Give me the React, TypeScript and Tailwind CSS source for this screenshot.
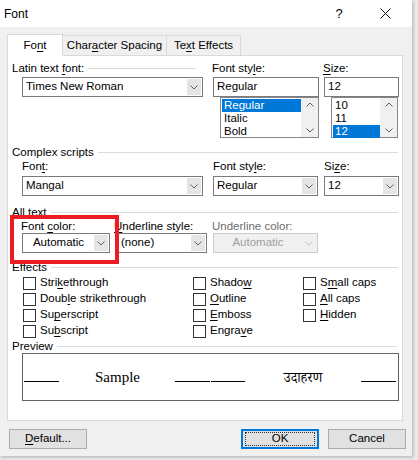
import React from 'react';

const Chevron: React.FC<{ up?: boolean; color?: string }> = ({ up, color = '#606060' }) => (
  <svg width="8" height="5" viewBox="0 0 8 5" className="block">
    <path d={up ? 'M0.5 4.5 L4 1 L7.5 4.5' : 'M0.5 0.5 L4 4 L7.5 0.5'} fill="none" stroke={color} strokeWidth="1" />
  </svg>
);

// label with an underlined access key
const Acc: React.FC<{ text: string; k: number }> = ({ text, k }) => (
  <>
    {text.slice(0, k)}
    <span className="underline underline-offset-2">{text[k]}</span>
    {text.slice(k + 1)}
  </>
);

const GroupLabel: React.FC<{ children: React.ReactNode; lineClass?: string }> = ({ children, lineClass = '' }) => (
  <div className="flex items-center h-[14px] leading-[14px] -ml-[10px]">
    <span className="whitespace-nowrap">{children}</span>
    <div className={`h-px bg-[#dcdcdc] flex-1 ml-[4px] ${lineClass}`} />
  </div>
);

const Combo: React.FC<{ value: string; w: string; center?: boolean; disabled?: boolean }> = ({ value, w, center, disabled }) => (
  <div
    className={`${w} h-[20px] flex border ${
      disabled ? 'border-[#cccccc] bg-[#f0f0f0] text-[#a0a0a0]' : 'border-[#7a7a7a] bg-white text-black'
    }`}
  >
    <div className={`flex-1 flex items-center px-[3px] whitespace-nowrap overflow-hidden ${center ? 'justify-center' : ''}`}>{value}</div>
    <div className={`w-[14px] m-[1px] ml-0 flex items-center justify-center ${disabled ? 'bg-[#f0f0f0]' : 'bg-[#e5e5e5]'}`}>
      <Chevron color={disabled ? '#c4c4c4' : '#606060'} />
    </div>
  </div>
);

const TextBox: React.FC<{ value: string; w: string }> = ({ value, w }) => (
  <div className={`${w} h-[20px] border border-[#7a7a7a] bg-white flex items-center px-[3px]`}>{value}</div>
);

const ListBox: React.FC<{ items: string[]; selected: number; w: string }> = ({ items, selected, w }) => (
  <div className={`${w} h-[41px] border border-[#828790] bg-white flex`}>
    <div className="flex-1 flex flex-col p-px pr-0">
      {items.map((it, i) => (
        <div
          key={it}
          className={`h-[13px] leading-[13px] px-[2px] ${i === selected ? 'bg-[#0078d7] text-white' : 'text-black'}`}
        >
          {it}
        </div>
      ))}
    </div>
    <div className="w-[17px] bg-[#f0f0f0] flex flex-col justify-between items-center py-[4px]">
      <Chevron up />
      <Chevron />
    </div>
  </div>
);

const Check: React.FC<{ children: React.ReactNode }> = ({ children }) => (
  <div className="h-[16px] flex items-center">
    <div className="w-[13px] h-[13px] border border-[#333333] bg-white ml-px" />
    <span className="ml-[4px] whitespace-nowrap">{children}</span>
  </div>
);

const Button: React.FC<{ children: React.ReactNode; primary?: boolean }> = ({ children, primary }) => (
  <div
    className={`w-[78px] h-[20px] flex items-center justify-center bg-[#e1e1e1] ${
      primary ? 'border-2 border-[#0078d7]' : 'border border-[#adadad]'
    }`}
  >
    {primary ? (
      <div className="w-[70px] h-[14px] border border-dotted border-[#333333] flex items-center justify-center">{children}</div>
    ) : (
      children
    )}
  </div>
);

export default function App() {
  return (
    <div
      className="w-[418px] h-[460px] bg-[#e9e9e9] text-[11.5px] text-black"
      style={{ fontFamily: '"Segoe UI", "Liberation Sans", Arial, sans-serif' }}
    >
      <div className="w-[412px] h-[456px] bg-[#f0f0f0] flex flex-col shadow-[1px_1px_3px_rgba(0,0,0,0.25)]">
        {/* title bar */}
        <div className="h-[27px] bg-white flex items-center shrink-0">
          <span className="ml-[4px] text-[12px]">Font</span>
          <span className="ml-auto text-[13px] w-[12px] text-center">?</span>
          <svg width="11" height="11" viewBox="0 0 11 11" className="ml-[35px] mr-[21px]">
            <path d="M0.5 0.5 L10.5 10.5 M10.5 0.5 L0.5 10.5" stroke="#111" strokeWidth="1" />
          </svg>
        </div>

        <div className="px-[7px] pt-[7px]">
          {/* tabs */}
          <div className="flex items-end h-[21px]">
            <div className="w-[56px] h-[22px] bg-white border border-[#d9d9d9] border-b-0 flex items-center justify-center relative z-10 -mb-px">
              <span><Acc text="Font" k={2} /></span>
            </div>
            <div className="w-[104px] h-[20px] border border-[#d9d9d9] border-l-0 border-b-0 flex items-center justify-center">
              <Acc text="Character Spacing" k={4} />
            </div>
            <div className="w-[74px] h-[20px] border border-[#d9d9d9] border-l-0 border-b-0 flex items-center justify-center">
              <Acc text="Text Effects" k={2} />
            </div>
          </div>

          {/* panel */}
          <div className="w-[396px] h-[366px] bg-white border border-[#d9d9d9] pl-[14px] pt-[5px] flex flex-col">
            {/* Latin text */}
            <div className="flex">
              <div className="w-[181px]">
                <GroupLabel lineClass="mr-[7px]">
                  Latin text <Acc text="font:" k={0} />
                </GroupLabel>
                <div className="mt-[2px]">
                  <Combo value="Times New Roman" w="w-[181px]" />
                </div>
              </div>
              <div className="w-[106px] ml-[10px]">
                <div className="h-[14px] leading-[14px] -ml-px">
                  <Acc text="Font style:" k={8} />
                </div>
                <div className="mt-[2px]">
                  <TextBox value="Regular" w="w-[106px]" />
                </div>
                <div className="ml-[7px]">
                  <ListBox items={['Regular', 'Italic', 'Bold']} selected={0} w="w-[99px]" />
                </div>
              </div>
              <div className="w-[75px] ml-[5px]">
                <div className="h-[14px] leading-[14px] -ml-px">
                  <Acc text="Size:" k={0} />
                </div>
                <div className="mt-[2px]">
                  <TextBox value="12" w="w-[75px]" />
                </div>
                <div className="ml-[7px]">
                  <ListBox items={['10', '11', '12']} selected={2} w="w-[67px]" />
                </div>
              </div>
            </div>

            {/* Complex scripts */}
            <div className="mt-[7px] w-[376px]">
              <GroupLabel>Complex scripts</GroupLabel>
            </div>
            <div className="flex">
              <div className="w-[181px]">
                <div className="h-[14px] leading-[14px]">
                  <Acc text="Font:" k={3} />
                </div>
                <div className="mt-[3px]">
                  <Combo value="Mangal" w="w-[181px]" />
                </div>
              </div>
              <div className="ml-[10px]">
                <div className="h-[14px] leading-[14px]">
                  <Acc text="Font style:" k={8} />
                </div>
                <div className="mt-[3px]">
                  <Combo value="Regular" w="w-[105px]" />
                </div>
              </div>
              <div className="ml-[6px]">
                <div className="h-[14px] leading-[14px]">
                  <Acc text="Size:" k={2} />
                </div>
                <div className="mt-[3px]">
                  <Combo value="12" w="w-[75px]" />
                </div>
              </div>
            </div>

            {/* All text */}
            <div className="mt-[9px] w-[376px]">
              <GroupLabel>All text</GroupLabel>
            </div>
            <div className="flex">
              <div className="relative">
                <div className="absolute -left-[12px] -top-[4px] w-[109px] h-[49px] border-4 border-[#ed1c24]" />
                <div className="h-[14px] leading-[14px] -ml-px">
                  Font <Acc text="color:" k={0} />
                </div>
                <Combo value="Automatic" w="w-[88px]" center />
              </div>
              <div className="ml-[7px]">
                <div className="h-[14px] leading-[14px] -ml-[3px]">
                  <Acc text="Underline style:" k={0} />
                </div>
                <Combo value="(none)" w="w-[90px]" />
              </div>
              <div className="ml-[6px]">
                <div className="h-[14px] leading-[14px] -ml-px text-[#6d6d6d]">Underline color:</div>
                <Combo value="Automatic" w="w-[105px]" center disabled />
              </div>
            </div>

            {/* Effects */}
            <div className="mt-[7px] w-[376px]">
              <GroupLabel>Effects</GroupLabel>
            </div>
            <div className="grid grid-cols-[170px_110px_1fr] mt-px">
              <div>
                <Check><Acc text="Strikethrough" k={4} /></Check>
                <Check><Acc text="Double strikethrough" k={4} /></Check>
                <Check><Acc text="Superscript" k={2} /></Check>
                <Check><Acc text="Subscript" k={2} /></Check>
              </div>
              <div>
                <Check><Acc text="Shadow" k={5} /></Check>
                <Check><Acc text="Outline" k={0} /></Check>
                <Check><Acc text="Emboss" k={0} /></Check>
                <Check><Acc text="Engrave" k={5} /></Check>
              </div>
              <div>
                <Check><Acc text="Small caps" k={1} /></Check>
                <Check><Acc text="All caps" k={0} /></Check>
                <Check><Acc text="Hidden" k={0} /></Check>
              </div>
            </div>

            {/* Preview */}
            <div className="w-[376px]">
              <GroupLabel lineClass="mr-[1px]">Preview</GroupLabel>
            </div>
            <div
              className="w-[377px] h-[48px] border border-[#646464] flex items-end gap-[36px] pl-px pb-[18px]"
              style={{ fontFamily: '"Liberation Serif", "Times New Roman", serif' }}
            >
              <div className="w-[35px] h-px bg-black" />
              <div className="w-[44px] text-center text-[15px] leading-[15px] whitespace-nowrap -mb-[3px]">Sample</div>
              <div className="w-[70px] h-px flex gap-px">
                <div className="flex-1 bg-black" />
                <div className="flex-1 bg-black" />
              </div>
              <div
                className="w-[44px] text-center text-[14px] leading-[15px] whitespace-nowrap -mb-[6px] font-normal"
                style={{ fontFamily: 'Mangal, "Noto Serif Devanagari", "Noto Sans Devanagari", "Lohit Devanagari", FreeSerif, serif' }}
              >
                उदाहरण
              </div>
              <div className="w-[35px] h-px bg-black" />
            </div>
          </div>

          {/* buttons */}
          <div className="flex mt-[8px] ml-[2px] -mr-px">
            <Button><Acc text="Default..." k={0} /></Button>
            <div className="ml-auto">
              <Button primary>OK</Button>
            </div>
            <div className="ml-[9px]">
              <Button>Cancel</Button>
            </div>
          </div>
        </div>
      </div>
    </div>
  );
}
